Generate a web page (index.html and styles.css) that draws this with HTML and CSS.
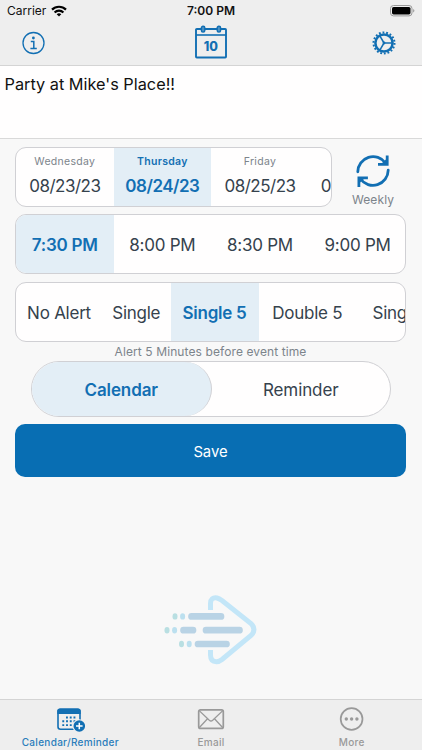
FILE: index.html
```html
<!DOCTYPE html>
<html lang="en">
<head>
  <meta charset="UTF-8">
  <title>Calendar/Reminder</title>
  <link rel="stylesheet" href="styles.css">
</head>
<body>
<div class="app">
  <!-- status bar + nav -->
  <header class="header">
    <div class="status">
      <div class="carrier">
        <span>Carrier</span>
        <svg width="16" height="12" viewBox="0 0 16 12" fill="none" stroke="#000" stroke-width="2.2">
          <path d="M1 4.6a10 10 0 0 1 14 0"/>
          <path d="M3.6 7.4a6.2 6.2 0 0 1 8.8 0"/>
          <path d="M8 11.6 5.7 9.3a3.3 3.3 0 0 1 4.6 0z" fill="#000" stroke="none"/>
        </svg>
      </div>
      <div class="clock">7:00 PM</div>
      <div class="battery">
        <svg width="25" height="12" viewBox="0 0 25 12">
          <rect x=".5" y=".5" width="21.5" height="10.4" rx="3" fill="none" stroke="#999"/>
          <rect x="2" y="2" width="18.5" height="7.4" rx="1.6" fill="#000"/>
          <path d="M23.2 4v3.6q1.2-.5 1.2-1.8T23.2 4z" fill="#999"/>
        </svg>
      </div>
    </div>
    <div class="nav">
      <svg class="info" width="24" height="24" viewBox="0 0 24 24" fill="none" stroke="#126fb3">
        <circle cx="11.5" cy="12" r="10.5" stroke-width="1.3"/>
        <circle cx="11.4" cy="7" r="1.4" fill="#126fb3" stroke="none"/>
        <path d="M8.8 10.5h3v6.8M8.4 17.4h6.4" stroke-width="1.5"/>
      </svg>
      <svg class="day" width="32" height="34" viewBox="0 0 32 34" fill="none" stroke="#126fb3">
        <rect x="1" y="4" width="30" height="28.5" rx=".8" stroke-width="1.9"/>
        <path d="M1 10h30" stroke-width="1.6"/>
        <rect x="6.4" y="1.2" width="3.4" height="5.8" rx="1.6" fill="#4f91c2" stroke-width="1.4"/>
        <rect x="22.2" y="1.2" width="3.4" height="5.8" rx="1.6" fill="#4f91c2" stroke-width="1.4"/>
        <text x="15.8" y="25.5" class="day-num">10</text>
      </svg>
      <svg class="gear" width="24" height="24" viewBox="0 0 24 24" fill="none" stroke="#126fb3">
        <circle cx="12" cy="12" r="10.5" stroke-width="2" stroke-dasharray="1.833 1.833"/>
        <circle cx="12" cy="12" r="8.6" stroke-width="2.5"/>
        <path d="M12 12h8M12 12 8 5.1M12 12 8 18.9" stroke-width="1.5"/>
        <circle cx="12" cy="12" r="1.4" fill="#126fb3" stroke="none"/>
      </svg>
    </div>
  </header>

  <div class="note">Party at Mike's Place!!</div>

  <main class="main">
    <div class="top">
      <div class="box dates">
        <div class="cell"><small>Wednesday</small><span>08/23/23</span></div>
        <div class="cell on"><small>Thursday</small><span>08/24/23</span></div>
        <div class="cell"><small>Friday</small><span>08/25/23</span></div>
        <div class="cell next"><small></small><span>0</span></div>
      </div>
      <div class="repeat">
        <svg width="34" height="34" viewBox="0 0 34 34" fill="none" stroke="#126fb3" stroke-width="2.8">
          <g stroke-linecap="round">
            <path d="M1.8 17.8A15.3 15.3 0 0 1 29.5 9"/>
            <path d="M32.2 16.2A15.3 15.3 0 0 1 4.5 25"/>
          </g>
          <path d="M31.2 1.5v8.9h-9.2"/>
          <path d="M2.9 33v-9.2h9"/>
          <path d="M25.5 9.5 30.5 5v4.5zM8.500 24.600 3.500 29v-4.400z" fill="#126fb3" stroke="none"/>
        </svg>
        <span>Weekly</span>
      </div>
    </div>

    <div class="box times">
      <div class="cell on">7:30 PM</div>
      <div class="cell">8:00 PM</div>
      <div class="cell">8:30 PM</div>
      <div class="cell">9:00 PM</div>
    </div>

    <div class="box alerts">
      <div class="cell none">No Alert</div>
      <div class="cell single">Single</div>
      <div class="cell single-five on">Single 5</div>
      <div class="cell">Double 5</div>
      <div class="cell next">Sing</div>
    </div>
    <p class="hint">Alert 5 Minutes before event time</p>

    <div class="toggle">
      <div class="option on">Calendar</div>
      <div class="option">Reminder</div>
    </div>

    <button class="save">Save</button>

    <svg class="logo" width="94" height="72" viewBox="0 0 94 72" fill="none">
      <path d="M46.5 16V9.5Q46.5 3 53 4Q55 4.5 58 6.5L87 29.5Q93 35.5 87 41.5L58 65.5Q55 67.8 52.5 67.8Q46.5 67.5 46.5 61V56" stroke="#c3e6f8" stroke-width="5"/>
      <g stroke="#b9d3e5" stroke-width="6.7" stroke-linecap="round">
        <path d="M27.5 22.4H57M19.5 36.2H29M42 36.2H75.5M34 50H62.5"/>
      </g>
      <g fill="#b9dfe2">
        <ellipse cx="11" cy="22.4" rx="2.5" ry="3.2"/>
        <ellipse cx="3" cy="36.2" rx="2.5" ry="3.2"/>
        <ellipse cx="17.5" cy="50" rx="2.5" ry="3.2"/>
      </g>
      <g fill="#bce0ef">
        <ellipse cx="18.6" cy="22.4" rx="2.5" ry="3.2"/>
        <ellipse cx="10.6" cy="36.2" rx="2.5" ry="3.2"/>
        <ellipse cx="25.2" cy="50" rx="2.5" ry="3.2"/>
      </g>
    </svg>
  </main>

  <footer class="tabs">
    <div class="tab active">
      <svg width="30" height="26" viewBox="-1.3 0 30 26" fill="none">
        <rect x="1.7" y="2.2" width="22" height="20" rx="2.5" stroke="#126fb3" stroke-width="1.6"/>
        <path d="M1 7V4q0-2.600 2.600-2.600h18.200q2.600 0 2.600 2.600v3z" fill="#126fb3"/>
        <path d="M9.7 10.5H20M6 14.3H20M6 18.1H16" stroke="#126fb3" stroke-width="1.9" stroke-dasharray="1.9 1.85"/>
        <circle cx="23" cy="19" r="6.8" fill="#eee"/>
        <circle cx="23" cy="19" r="5.8" fill="#126fb3"/>
        <path d="M19.7 19h6.600M23 15.7v6.600" stroke="#fff" stroke-width="1.5"/>
      </svg>
      <span>Calendar/Reminder</span>
    </div>
    <div class="tab">
      <svg width="28" height="26" viewBox="0 0 28 26" fill="none" stroke="#999" stroke-width="1.7">
        <rect x="1.7" y="2.8" width="24.6" height="18.6" rx="1.7"/>
        <path d="M2.2 3.6 12.3 13.3q1.7 1.5 3.4 0L25.8 3.6M2.2 20.8 10.5 11.7M25.8 20.8 17.5 11.7" stroke-width="1.3"/>
      </svg>
      <span>Email</span>
    </div>
    <div class="tab">
      <svg width="26" height="26" viewBox="0 0 26 26">
        <circle cx="12.6" cy="12" r="10.9" fill="none" stroke="#999" stroke-width="1.7"/>
        <circle cx="7.3" cy="12" r="1.7" fill="#999"/>
        <circle cx="12.6" cy="12" r="1.7" fill="#999"/>
        <circle cx="17.9" cy="12" r="1.7" fill="#999"/>
      </svg>
      <span>More</span>
    </div>
  </footer>
</div>
</body>
</html>
```
FILE: styles.css
```css
body {
  margin: 0;
  background-color: #F8F8F8;
  font-family: Inter, "Liberation Sans", sans-serif;
  color: #35424D;
}

svg {
  display: block;
}

.app {
  display: flex;
  flex-direction: column;
  width: 422px;
  height: 750px;
  overflow: hidden;
}

.header {
  height: 66px;
  box-sizing: border-box;
  background-color: #EEE;
  border-bottom: 1px solid #D4D4D4;
}

.status {
  display: grid;
  grid-template-columns: 1fr auto 1fr;
  align-items: center;
  height: 21px;
  padding: 0 7px 0 7px;
  font-size: 12px;
  color: #111;
}

.carrier {
  display: flex;
  align-items: center;
  gap: 5px;
}

.clock {
  font-weight: 600;
}

.battery {
  display: flex;
  justify-content: flex-end;
}

.nav {
  display: grid;
  grid-template-columns: 1fr auto 1fr;
  align-items: center;
  height: 43px;
  padding: 0 26px 0 22px;
}

.day {
  margin: -1px 0 0 4px;
}

.gear {
  justify-self: end;
}

.day-num {
  font-size: 12.5px;
  font-weight: 800;
  text-anchor: middle;
  fill: #126FB3;
  stroke: none;
}

.note {
  height: 73px;
  box-sizing: border-box;
  padding: 8px 4.5px;
  background-color: #FFFEFE;
  border-bottom: 1px solid #D9D9D9;
  font-size: 16.3px;
  line-height: 21px;
  color: #111;
}

.main {
  flex: 1;
  display: flex;
  flex-direction: column;
  padding: 8px 16px 0 15px;
}

.top {
  display: flex;
  height: 60px;
}

.box {
  display: flex;
  height: 60px;
  box-sizing: border-box;
  border: 1px solid #D0D0D4;
  border-radius: 11px;
  background-color: #FFFEFE;
  overflow: hidden;
  font-size: 17px;
  letter-spacing: -.25px;
}

.cell {
  flex: none;
  display: flex;
  align-items: center;
  justify-content: center;
  box-sizing: border-box;
  width: 97.6px;
  padding-top: 2px;
  white-space: nowrap;
}

.on {
  background-color: #E3EEF6;
  color: #126FB3;
  font-weight: 600;
}

.dates {
  width: 317px;
  letter-spacing: -.5px;
}

.dates .cell {
  flex-direction: column;
  padding-top: 0;
}

.dates small {
  height: 16px;
  margin-top: -2px;
  font-size: 10.5px;
  line-height: 16px;
  letter-spacing: .3px;
  color: #7C848B;
}

.dates .on small {
  color: #126FB3;
}

.dates span {
  margin-top: 4px;
  line-height: 24px;
}

.dates .next {
  flex: 1;
  align-items: flex-end;
}

.repeat {
  flex: 1;
  display: flex;
  flex-direction: column;
  align-items: center;
  padding: 7px 0 0 8px;
  font-size: 12px;
  letter-spacing: .1px;
  color: #7C848B;
}

.repeat span {
  margin-top: 4px;
  line-height: 15px;
}

.times {
  margin-top: 7px;
}

.alerts {
  margin-top: 8px;
}

.alerts .none {
  width: 86px;
}

.alerts .single {
  width: 68.5px;
}

.alerts .single-five {
  width: 88px;
}

.alerts .next {
  flex: 1;
  justify-content: flex-end;
  margin-right: -2px;
}

.hint {
  margin: 2px 0;
  font-size: 12px;
  line-height: 15px;
  text-align: center;
  letter-spacing: .1px;
  color: #7C848B;
}

.toggle {
  display: flex;
  height: 56px;
  box-sizing: border-box;
  margin: 0 15px 0 16px;
  border: 1px solid #D0D0D4;
  border-radius: 28px;
  background-color: #FFFEFE;
  font-size: 17px;
  letter-spacing: -.1px;
}

.option {
  flex: 1;
  display: flex;
  align-items: center;
  justify-content: center;
  box-sizing: border-box;
  padding-top: 1px;
}

.option.on {
  border-right: 1px solid #D0D0D4;
  border-radius: 27px;
}

.save {
  height: 53px;
  margin: 7px 0 0;
  padding: 2px 0 0;
  border: none;
  border-radius: 10px;
  background-color: #086EB3;
  color: #FFF;
  font-family: inherit;
  font-size: 14.8px;
}

.logo {
  margin: 117px 0 0 149px;
}

.tabs {
  display: grid;
  grid-template-columns: repeat(3, 1fr);
  height: 51px;
  box-sizing: border-box;
  border-top: 1px solid #D4D4D4;
  background-color: #EEE;
}

.tab {
  display: flex;
  flex-direction: column;
  align-items: center;
  padding-top: 7px;
  font-size: 10px;
  font-weight: 500;
  letter-spacing: .3px;
  line-height: 14px;
  color: #999;
}

.active {
  color: #2A7DBB;
}

.tab span {
  margin-top: 2px;
}
```
